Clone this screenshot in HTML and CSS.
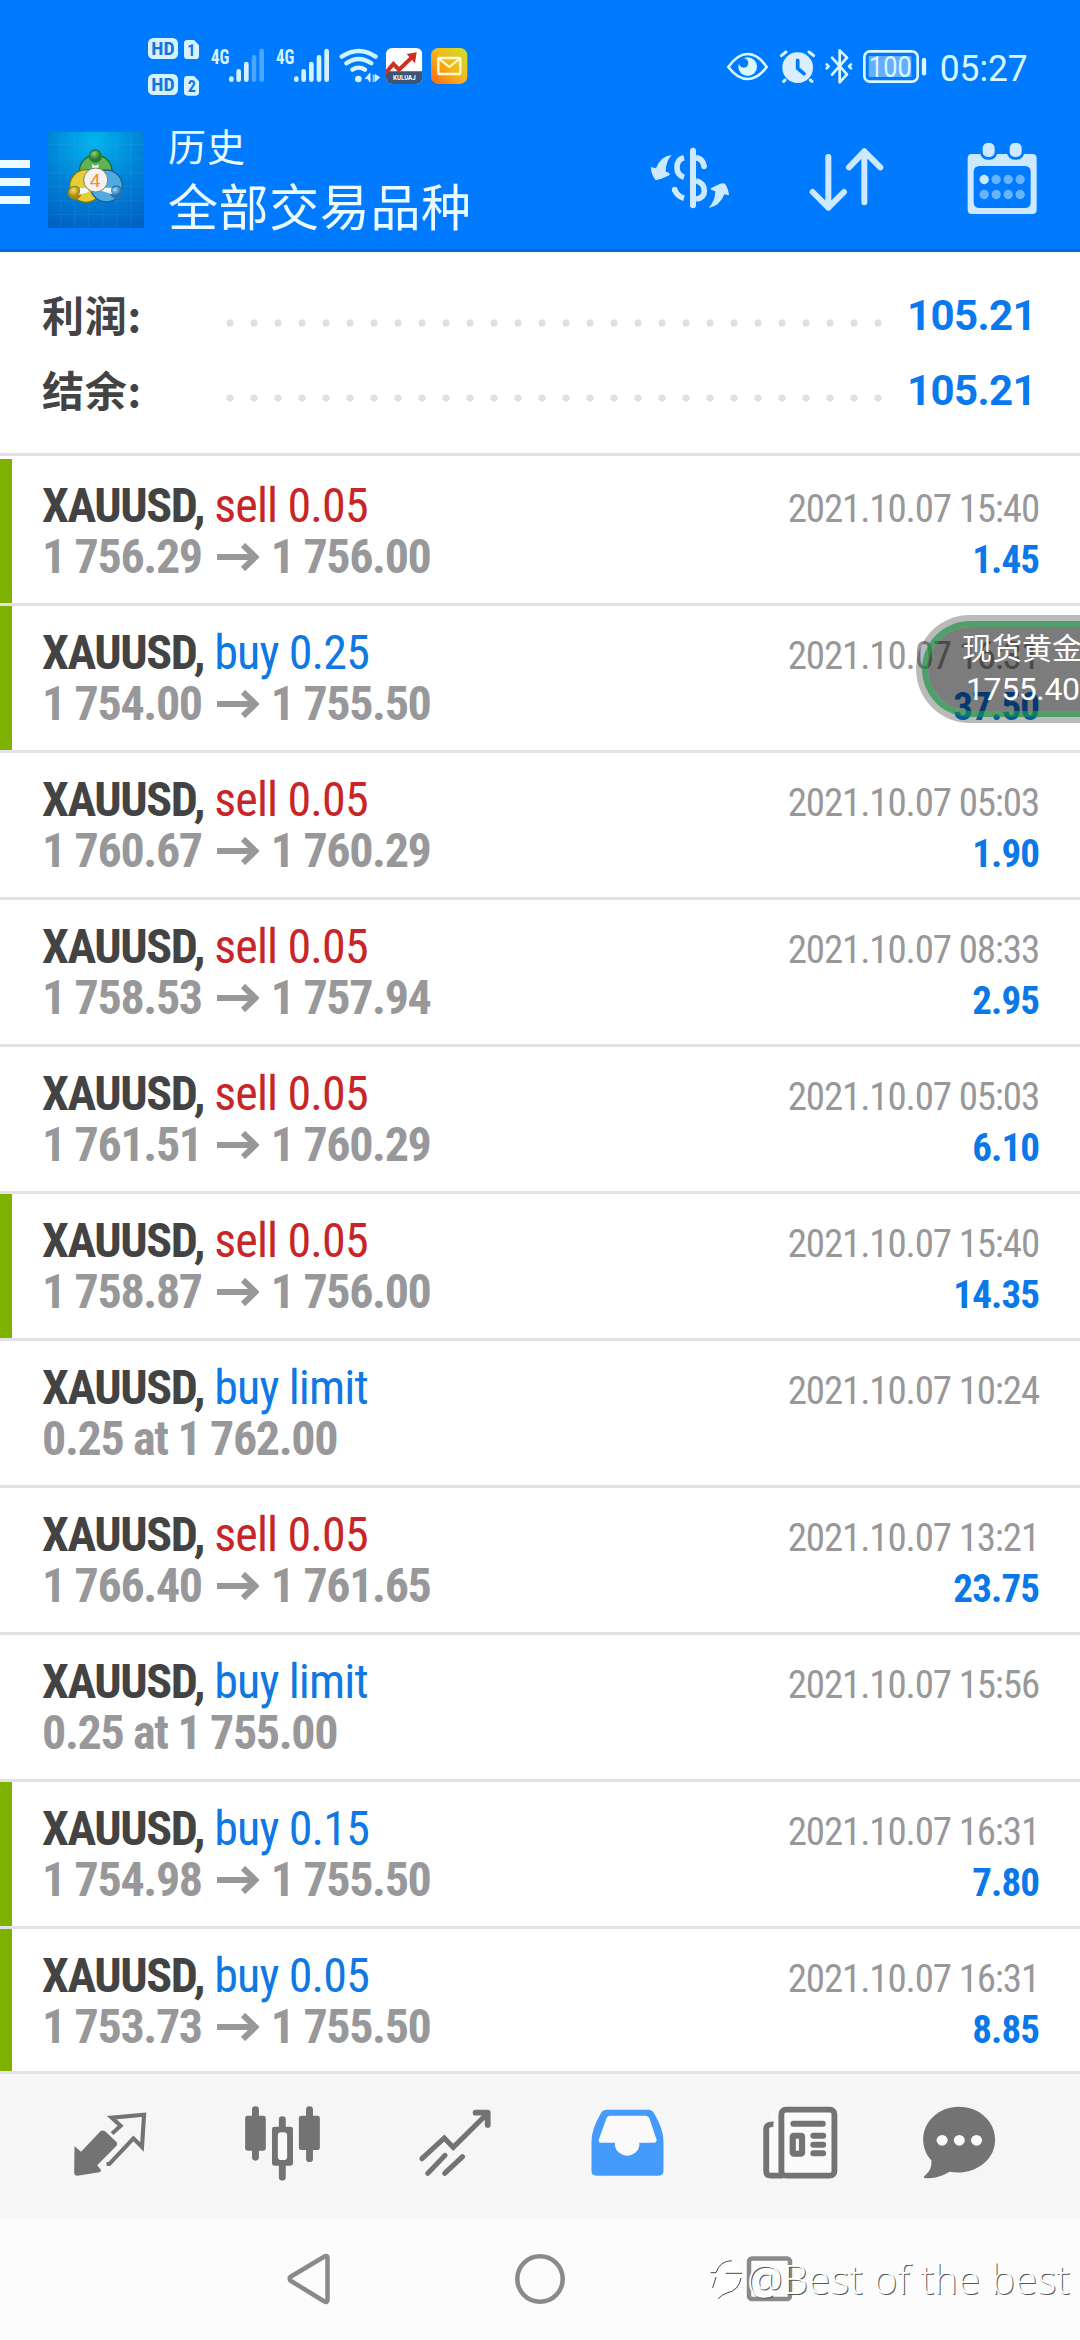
FILE: index.html
```
<!DOCTYPE html>
<html lang="zh-CN">
<head>
<meta charset="utf-8">
<title>历史</title>
<link rel="stylesheet" href="styles.css">
</head>
<body>
<svg class="defs" aria-hidden="true">
  <symbol id="arrow" viewBox="0 0 42 28"><path d="M0 14H38M26 2L38.500 14L26 26" fill="none" stroke="currentColor" stroke-width="6"/></symbol>
</svg>
<header class="header">
  <div class="status">
    <svg class="status-left" viewBox="0 0 1050 270" width="350" height="90">
      <g fill="#d5f3ff">
        <rect x="54" y="54" width="90" height="63" rx="16"/><path d="M172 60h20l15 16v31q0 10-10 10h-25q-10 0-10-10V70q0-10 10-10z"/>
        <rect x="54" y="162" width="90" height="63" rx="16"/><path d="M172 168h20l15 16v33q0 10-10 10h-25q-10 0-10-10v-39q0-10 10-10z"/>
      </g>
      <g class="badge-text"><text x="64" y="106" textLength="70" lengthAdjust="spacingAndGlyphs">HD</text><text x="64" y="214" textLength="70" lengthAdjust="spacingAndGlyphs">HD</text><text class="sim" x="172" y="108">1</text><text class="sim" x="173" y="216">2</text></g>
      <g class="net-text"><text x="243" y="132" textLength="55" lengthAdjust="spacingAndGlyphs">4G</text><text x="438" y="132" textLength="55" lengthAdjust="spacingAndGlyphs">4G</text></g>
      <g stroke="#d5f3ff" stroke-width="14" stroke-linecap="round">
        <path d="M304 176v3M326 154v25M349 132v47M499 176v3M521 154v25M544 132v47M567 112v67M590 93v86"/>
        <path d="M372 112v67M395 93v86" stroke="#4ca6ff"/>
        <g fill="none" stroke-width="13"><path d="M635 110Q686 76 737 110M649 130Q686 104 724 130M667 149Q686 137 705 149"/></g>
      </g>
      <circle cx="685" cy="177" r="10" fill="#d5f3ff"/>
      <path d="M720 160v26l-6-10h-8zM730 164v22M735 164l14 8-14 13z" fill="#d5f3ff" stroke="#d5f3ff" stroke-width="3"/>
      <clipPath id="app"><rect x="768" y="84" width="109" height="108" rx="18"/></clipPath>
      <g clip-path="url(#app)"><rect x="768" y="84" width="109" height="108" fill="#fff"/><path d="M768 154h109v38H768z" fill="#3c5575"/><path d="M766 160L790 132L807 149L848 110" fill="none" stroke="#cd2e20" stroke-width="12"/><path d="M830 102L860 97L855 130z" fill="#cd2e20"/><text class="app-text" x="789" y="179" textLength="68" lengthAdjust="spacingAndGlyphs">KULUAJ</text></g>
      <linearGradient id="mail" x1="0" y1="1" x2="1" y2="0"><stop offset="0" stop-color="#ff6515"/><stop offset=".5" stop-color="#f6b51a"/><stop offset="1" stop-color="#c7e32e"/></linearGradient>
      <rect x="903" y="84" width="109" height="108" rx="22" fill="url(#mail)"/><rect x="925" y="114" width="66" height="48" rx="4" fill="none" stroke="#fffbd0" stroke-width="7"/><path d="M928 117L958 141L988 117" fill="none" stroke="#fffbd0" stroke-width="6"/>
    </svg>
    <svg viewBox="0 0 1110 270" width="370" height="90">
      <g fill="none" stroke="#d9f8ff" stroke-width="8" stroke-linejoin="round" stroke-linecap="round">
        <path d="M55 141Q82 102 113 102T170 141Q144 177 113 177T55 141z"/>
        <path d="M214 107L228 96M297 96L311 107M225 180L221 184M301 180L306 184" stroke-width="9"/>
        <path d="M366 113L411 163L389 187V91L411 113L366 164M350 133L356 139L350 145M423 133L417 139L423 145"/>
        <rect x="463" y="94" width="160" height="91" rx="17"/><path d="M642 120v40" stroke-width="13"/>
      </g>
      <circle cx="113" cy="140" r="28" fill="#d9f8ff"/><circle cx="101" cy="129" r="14" fill="#007aff"/>
      <circle cx="263" cy="143" r="46" fill="#d9efff"/><path d="M263 121v24l19 16" fill="none" stroke="#007aff" stroke-width="11" stroke-linecap="round"/>
      <rect x="476" y="108" width="128" height="63" rx="4" fill="#65adff"/>
      <g class="status-text"><text x="477" y="170" font-size="86" textLength="128" lengthAdjust="spacingAndGlyphs">100</text><text x="689" y="184" font-size="111" textLength="264" lengthAdjust="spacingAndGlyphs">05:27</text></g>
    </svg>
  </div>
  <div class="toolbar">
    <div class="menu"><i></i><i></i><i></i></div>
    <svg class="logo" viewBox="12 12 288 288" width="96" height="96">
      <defs>
        <radialGradient id="sky" cx=".48" cy=".1" r=".95"><stop offset="0" stop-color="#00b5ed"/><stop offset=".55" stop-color="#0081d6"/><stop offset="1" stop-color="#0063c4"/></radialGradient>
        <radialGradient id="green" cx=".4" cy=".3"><stop offset="0" stop-color="#8fce7c"/><stop offset="1" stop-color="#257a30"/></radialGradient>
        <radialGradient id="gold" cx=".4" cy=".3"><stop offset="0" stop-color="#f6e36a"/><stop offset="1" stop-color="#a8850e"/></radialGradient>
        <radialGradient id="blue" cx=".4" cy=".3"><stop offset="0" stop-color="#9cdcf8"/><stop offset="1" stop-color="#1f6fb0"/></radialGradient>
      </defs>
      <path fill="url(#sky)" d="M12 12h288v288H12z"/>
      <path d="M50 12v288M92 12v288M134 12v288M176 12v288M218 12v288M260 12v288M12 50h288M12 92h288M12 134h288M12 176h288M12 218h288M12 260h288" stroke="#54bdf1" stroke-opacity=".22" stroke-width="2"/>
      <g stroke-width="4">
        <circle cx="155" cy="130" r="49" fill="#62b453" stroke="#1f6b35"/><circle cx="126" cy="174" r="49" fill="#e4cd35" stroke="#7b731c"/><circle cx="187" cy="174" r="48" fill="#51aae0" stroke="#1c5f97"/>
        <circle cx="154" cy="84" r="18" fill="url(#green)" stroke="#287b35"/><circle cx="92" cy="194" r="19" fill="url(#gold)" stroke="#9d8011"/><circle cx="217" cy="192" r="18" fill="url(#blue)" stroke="#2878b5"/>
      </g>
      <path d="M144 108q10 10 20 0l-3 30h-14zM107 181q3 15-4 20l32-9-7-13zM203 179q-5 12 3 20l-33-10 6-10z" fill="#effaff"/>
      <circle cx="155" cy="156" r="36" fill="#f7f2ee" stroke="#6f876c" stroke-width="3"/><text class="logo-text" x="137" y="177">4</text>
    </svg>
    <div class="titles"><div class="sub">历史</div><div class="main">全部交易品种</div></div>
    <div class="actions">
      <svg viewBox="90 60 240 240" width="80" height="80" fill="none" stroke="#cce9ff">
        <path d="M219 92v164" stroke-width="18" stroke-linecap="round"/>
        <path d="M192 113Q171 118 171 142T192 172M228 113Q248 116 252 138M228 182Q253 190 253 212T228 237M192 235Q171 229 164 209" stroke-width="17"/><circle cx="252" cy="139" r="8.500" fill="#cce9ff" stroke="none"/><circle cx="164" cy="209" r="8.500" fill="#cce9ff" stroke="none"/>
        <path d="M155 105Q122 108 108 145L93 141Q92 161 106 179Q112 183 149 165Q151 158 137 155Q137 125 155 105zM266 264Q300 258 313 223L327 226Q326 207 315 191Q308 185 272 205Q270 210 286 214Q286 242 266 264z" fill="#cce9ff" stroke="none"/>
      </svg>
      <svg viewBox="560 60 240 240" width="80" height="80" fill="none" stroke="#cce9ff" stroke-width="18" stroke-linecap="round" stroke-linejoin="round"><path d="M624 111V263M577 216L624 263L671 216M732 247V94M686 142L732 94L780 142"/></svg>
      <svg viewBox="1030 60 240 240" width="80" height="80">
        <path d="M1057 102H1238Q1251 102 1251 115V269Q1251 282 1238 282H1057Q1044 282 1044 269V115Q1044 102 1057 102zM1080 138Q1062 138 1062 156V246Q1062 264 1080 264H1215Q1233 264 1233 246V156Q1233 138 1215 138z" fill="#cce9ff" fill-rule="evenodd"/>
        <g fill="#cce9ff" stroke="#007aff" stroke-width="8"><rect x="1085" y="65" width="44" height="50" rx="19"/><rect x="1166" y="65" width="44" height="50" rx="19"/></g>
        <circle cx="1093.500" cy="178.500" r="14" fill="#cce9ff"/>
        <g fill="#66b3ff"><circle cx="1129.500" cy="178.500" r="14"/><circle cx="1165.500" cy="178.500" r="14"/><circle cx="1201.500" cy="178.500" r="14"/><circle cx="1093.500" cy="223.500" r="14"/><circle cx="1129.500" cy="223.500" r="14"/><circle cx="1165.500" cy="223.500" r="14"/><circle cx="1201.500" cy="223.500" r="14"/></g>
      </svg>
    </div>
  </div>
</header>
<section class="summary">
  <div class="total"><span class="label">利润:</span><span class="dots"></span><span class="amount">105.21</span></div>
  <div class="total"><span class="label">结余:</span><span class="dots"></span><span class="amount">105.21</span></div>
</section>
<main class="deals">
  <article class="deal marked"><div class="line"><span class="name"><b>XAUUSD,</b> <span class="sell">sell 0.05</span></span><span class="time">2021.10.07 15:40</span></div><div class="line"><span class="price">1 756.29<svg class="to"><use href="#arrow"/></svg>1 756.00</span><span class="profit">1.45</span></div></article>
  <article class="deal marked"><div class="line"><span class="name"><b>XAUUSD,</b> <span class="buy">buy 0.25</span></span><span class="time">2021.10.07 16:31</span></div><div class="line"><span class="price">1 754.00<svg class="to"><use href="#arrow"/></svg>1 755.50</span><span class="profit">37.50</span></div></article>
  <article class="deal"><div class="line"><span class="name"><b>XAUUSD,</b> <span class="sell">sell 0.05</span></span><span class="time">2021.10.07 05:03</span></div><div class="line"><span class="price">1 760.67<svg class="to"><use href="#arrow"/></svg>1 760.29</span><span class="profit">1.90</span></div></article>
  <article class="deal"><div class="line"><span class="name"><b>XAUUSD,</b> <span class="sell">sell 0.05</span></span><span class="time">2021.10.07 08:33</span></div><div class="line"><span class="price">1 758.53<svg class="to"><use href="#arrow"/></svg>1 757.94</span><span class="profit">2.95</span></div></article>
  <article class="deal"><div class="line"><span class="name"><b>XAUUSD,</b> <span class="sell">sell 0.05</span></span><span class="time">2021.10.07 05:03</span></div><div class="line"><span class="price">1 761.51<svg class="to"><use href="#arrow"/></svg>1 760.29</span><span class="profit">6.10</span></div></article>
  <article class="deal marked"><div class="line"><span class="name"><b>XAUUSD,</b> <span class="sell">sell 0.05</span></span><span class="time">2021.10.07 15:40</span></div><div class="line"><span class="price">1 758.87<svg class="to"><use href="#arrow"/></svg>1 756.00</span><span class="profit">14.35</span></div></article>
  <article class="deal"><div class="line"><span class="name"><b>XAUUSD,</b> <span class="buy">buy limit</span></span><span class="time">2021.10.07 10:24</span></div><div class="line"><span class="price">0.25 at 1 762.00</span></div></article>
  <article class="deal"><div class="line"><span class="name"><b>XAUUSD,</b> <span class="sell">sell 0.05</span></span><span class="time">2021.10.07 13:21</span></div><div class="line"><span class="price">1 766.40<svg class="to"><use href="#arrow"/></svg>1 761.65</span><span class="profit">23.75</span></div></article>
  <article class="deal"><div class="line"><span class="name"><b>XAUUSD,</b> <span class="buy">buy limit</span></span><span class="time">2021.10.07 15:56</span></div><div class="line"><span class="price">0.25 at 1 755.00</span></div></article>
  <article class="deal marked"><div class="line"><span class="name"><b>XAUUSD,</b> <span class="buy">buy 0.15</span></span><span class="time">2021.10.07 16:31</span></div><div class="line"><span class="price">1 754.98<svg class="to"><use href="#arrow"/></svg>1 755.50</span><span class="profit">7.80</span></div></article>
  <article class="deal marked"><div class="line"><span class="name"><b>XAUUSD,</b> <span class="buy">buy 0.05</span></span><span class="time">2021.10.07 16:31</span></div><div class="line"><span class="price">1 753.73<svg class="to"><use href="#arrow"/></svg>1 755.50</span><span class="profit">8.85</span></div></article>
</main>
<nav class="tabs">
  <svg viewBox="200 130 240 240" preserveAspectRatio="none"><path d="M216 260L235 276L292 214Q299 210 305 215L338 247Q342 253 338 258L282 317L293 331Q293 336 288 338L224 348Q216 348 215 340z" fill="#737373"/><path d="M325 222L350 198L324 174L418 165L412 262L387 236L317 313H309" fill="none" stroke="#737373" stroke-width="12"/></svg>
  <svg viewBox="697 130 240 240" preserveAspectRatio="none" fill="#737373"><path d="M739 150V293M896 150V297M817 180V208M817 312V353" stroke="#737373" stroke-width="20" stroke-linecap="round"/><rect x="709" y="168" width="60" height="105" rx="7"/><rect x="865" y="168" width="61" height="103" rx="7"/><rect x="787" y="201" width="61" height="117" rx="7"/><rect x="804" y="218" width="27" height="83" rx="10" fill="#fafafa"/></svg>
  <svg viewBox="1197 130 240 240" preserveAspectRatio="none" fill="none" stroke="#737373" stroke-width="15" stroke-linecap="round"><path d="M1220 297L1285 235L1311 263L1408 164M1237 341L1287 287M1286 341L1338 291"/><path d="M1376 159H1411V196" stroke-width="17" stroke-linejoin="round"/></svg>
  <svg viewBox="131 130 240 240" preserveAspectRatio="none"><path d="M190 150H313Q322 150 328 159Q357 210 356 245V334Q356 348 342 348H161Q147 348 147 334V245Q146 210 176 158Q181 150 190 150z" fill="#459bfc"/><path d="M201 168H302Q312 168 315 176L336 240Q337 248 329 249H286V258A36 36 0 0 1 215 258V249H175Q166 248 168 240L190 177Q193 168 201 168z" fill="#fafafa"/></svg>
  <svg class="news" viewBox="635 130 240 240" preserveAspectRatio="none" fill="none" stroke="#737373"><rect x="665" y="160" width="35" height="180" fill="#fafafa" stroke="none"/><rect x="700" y="150" width="154" height="198" rx="13" fill="#fafafa" stroke-width="17"/><path d="M677 194Q656 192 656 210V335Q656 348 669 348H705" stroke-width="17"/><path d="M735 192H820M793 228H821M793 255H821M793 281H821" stroke-width="18" stroke-linecap="round"/><rect x="733" y="228" width="27" height="54" rx="3" stroke-width="18"/></svg>
  <svg class="chat" viewBox="1094 130 240 240" preserveAspectRatio="none"><path d="M1213 141C1272 141 1318 185 1318 240C1318 307 1250 349 1186 336Q1151 357 1117 356Q1106 355 1115 347Q1135 331 1133 302C1119 288 1109 264 1109 240C1109 185 1155 141 1213 141z" fill="#737373"/><g fill="#fafafa"><circle cx="1164" cy="242" r="16"/><circle cx="1214" cy="242" r="16"/><circle cx="1264" cy="242" r="16"/></g></svg>
</nav>
<footer class="system">
  <svg viewBox="0 0 60 60" width="60" height="60" fill="none" stroke="#8a8a8a" stroke-width="4.500" stroke-linejoin="round"><path d="M10 30Q9 28.500 11 27.500L44.500 7.500Q47.500 6 47.500 9V51Q47.500 54 44.500 52.500L11 32Q9.500 31 10 30z"/></svg>
  <svg viewBox="0 0 60 60" width="60" height="60" fill="none" stroke="#8a8a8a" stroke-width="4.500"><circle cx="30" cy="30" r="22.700"/></svg>
  <svg viewBox="0 0 60 60" width="60" height="60" fill="none" stroke="#8a8a8a" stroke-width="4.500"><rect x="9" y="9.500" width="41" height="40.500" rx="3"/></svg>
</footer>
<div class="ticker"><div class="ticker-in"><span>现货黄金</span><span class="quote">1755.40</span></div></div>
<div class="watermark">
  <svg viewBox="25 65 105 135" width="35" height="45" fill="none"><path d="M34 112H48Q60 77 90 77Q124 82 120 124Q114 162 80 173Q65 177 54 190L75 172Q38 164 46 120Z" fill="#fff"/><path d="M30 112H46Q58 77 93 76M46 125L36 158M75 114H124M121 128Q115 165 79 173Q65 177 53 190" stroke="#222" stroke-width="2.500"/></svg>
  <span>@Best of the best</span>
</div>
</body>
</html>
```
FILE: styles.css
```
* { box-sizing: border-box; }
body { margin: 0; width: 1080px; height: 2340px; position: relative; overflow: hidden; background: #fff; font-family: Roboto, "Noto Sans CJK SC", sans-serif; display: flex; flex-direction: column; }
svg { display: block; flex: none; }
.defs { width: 0; height: 0; position: absolute; }

.header { height: 252px; flex: none; background: #007aff; border-bottom: 3px solid #0c69d2; color: #eafaff; }
.status { display: flex; justify-content: space-between; padding: 20px 0 0 130px; height: 110px; }
.badge-text { fill: #1675dd; font: bold 56px "Roboto Condensed", sans-serif; }
.badge-text .sim { font-size: 48px; }
.net-text { fill: #d5f3ff; font: bold 62px "Roboto Condensed", sans-serif; }
.app-text { fill: #fff; font: bold 20px Roboto, sans-serif; }
.status-text { fill: #d9f8ff; font-family: Roboto, sans-serif; }
.toolbar { display: flex; height: 139px; align-items: flex-start; }
.menu { width: 30px; margin: 50px 18px 0 0; display: flex; flex-direction: column; gap: 10px; }
.menu i { height: 8px; background: #eafaff; }
.logo { margin-top: 22px; }
.logo-text { fill: #ed8f45; font: 57px Roboto, sans-serif; }
.titles { margin: 7px 0 0 24px; font-family: "Noto Sans CJK SC", sans-serif; white-space: nowrap; }
.sub { font-size: 38px; line-height: 56px; letter-spacing: 1px; }
.main { font-size: 50px; line-height: 62px; letter-spacing: .6px; }
.actions { display: flex; gap: 76.670px; margin: 30px 36.670px 0 auto; }

.summary { height: 204px; flex: none; border-bottom: 3px solid #e2e2e4; padding: 26px 45px 0 42px; }
.total { height: 75px; display: flex; align-items: center; }
.label { width: 184px; margin-top: -5px; font: bold 42px/75px "Noto Sans CJK SC", sans-serif; color: #434343; letter-spacing: .8px; }
.dots { height: 8px; width: 672px; margin-top: 15px; background: radial-gradient(circle at 4px 4px, #e0e0e2 3.200px, transparent 4px) 0 0 / 24px 8px; }
.amount { margin: 0 -1px 0 auto; font-size: 42px; font-weight: bold; color: #0a78ee; letter-spacing: -.600px; }

.deals { height: 1615px; flex: none; padding-top: 3px; overflow: hidden; }
.deal { height: 147px; border-bottom: 3px solid #e2e2e4; padding: 21px 41px 0 42px; font-family: "Roboto Condensed", sans-serif; }
.deal.marked { background: linear-gradient(#7fb100, #7fb100) 0 0 / 12px 144px no-repeat; }
.line { display: flex; height: 51px; line-height: 51px; align-items: baseline; justify-content: space-between; white-space: nowrap; }
.name { font-size: 48px; letter-spacing: -.850px; }
.name b { color: #434343; letter-spacing: -1.400px; }
.sell { color: #c82528; }
.buy { color: #0f78e3; }
.price { font-size: 48px; font-weight: bold; color: #98989a; letter-spacing: -1.350px; }
.to { display: inline-block; width: 42px; height: 28px; margin: 0 12px 0 15px; vertical-align: 2px; }
.time { font-size: 39px; color: #98989a; letter-spacing: -1.150px; }
.profit { font-size: 39px; font-weight: bold; color: #0a78e8; letter-spacing: -.900px; }

.tabs { height: 147px; flex: none; background: #f6f6f6; border-top: 3px solid #e2e2e4; display: flex; gap: 89.700px; padding: 29px 0 0 69px; }
.tabs svg { width: 82.650px; height: 80px; }
.tabs .news { margin-left: 1px; }
.tabs .chat { margin-left: -14px; }
.system { height: 122px; flex: none; background: #fcfcfc; display: flex; gap: 170px; justify-content: center; padding-top: 31px; }

.ticker { position: absolute; left: 916px; top: 615px; width: 164px; height: 108px; border-radius: 54px 0 0 54px; background: rgba(0,0,0,.27); padding: 6px 0 6px 6px; color: #fff; }
.ticker-in { height: 96px; border-radius: 48px 0 0 48px; border: solid rgba(22,145,64,.65); border-width: 6px 0 6px 6px; background: rgba(0,0,0,.33) padding-box; padding-left: 34px; display: flex; flex-direction: column; font: 30px/42px "Noto Sans CJK SC", sans-serif; white-space: nowrap; }
.ticker-in span:first-child { margin-top: -2px; }
.quote { font: 32px/44px Roboto, sans-serif; padding-left: 4px; letter-spacing: -.400px; }
.watermark { position: absolute; left: 709px; top: 2252px; display: flex; align-items: center; color: #fff; font: 300 40px/54px "Open Sans", sans-serif; white-space: nowrap; text-shadow: 1px 1px 0 #555; }
.watermark span { letter-spacing: .3px; margin-left: 3px; }
```
